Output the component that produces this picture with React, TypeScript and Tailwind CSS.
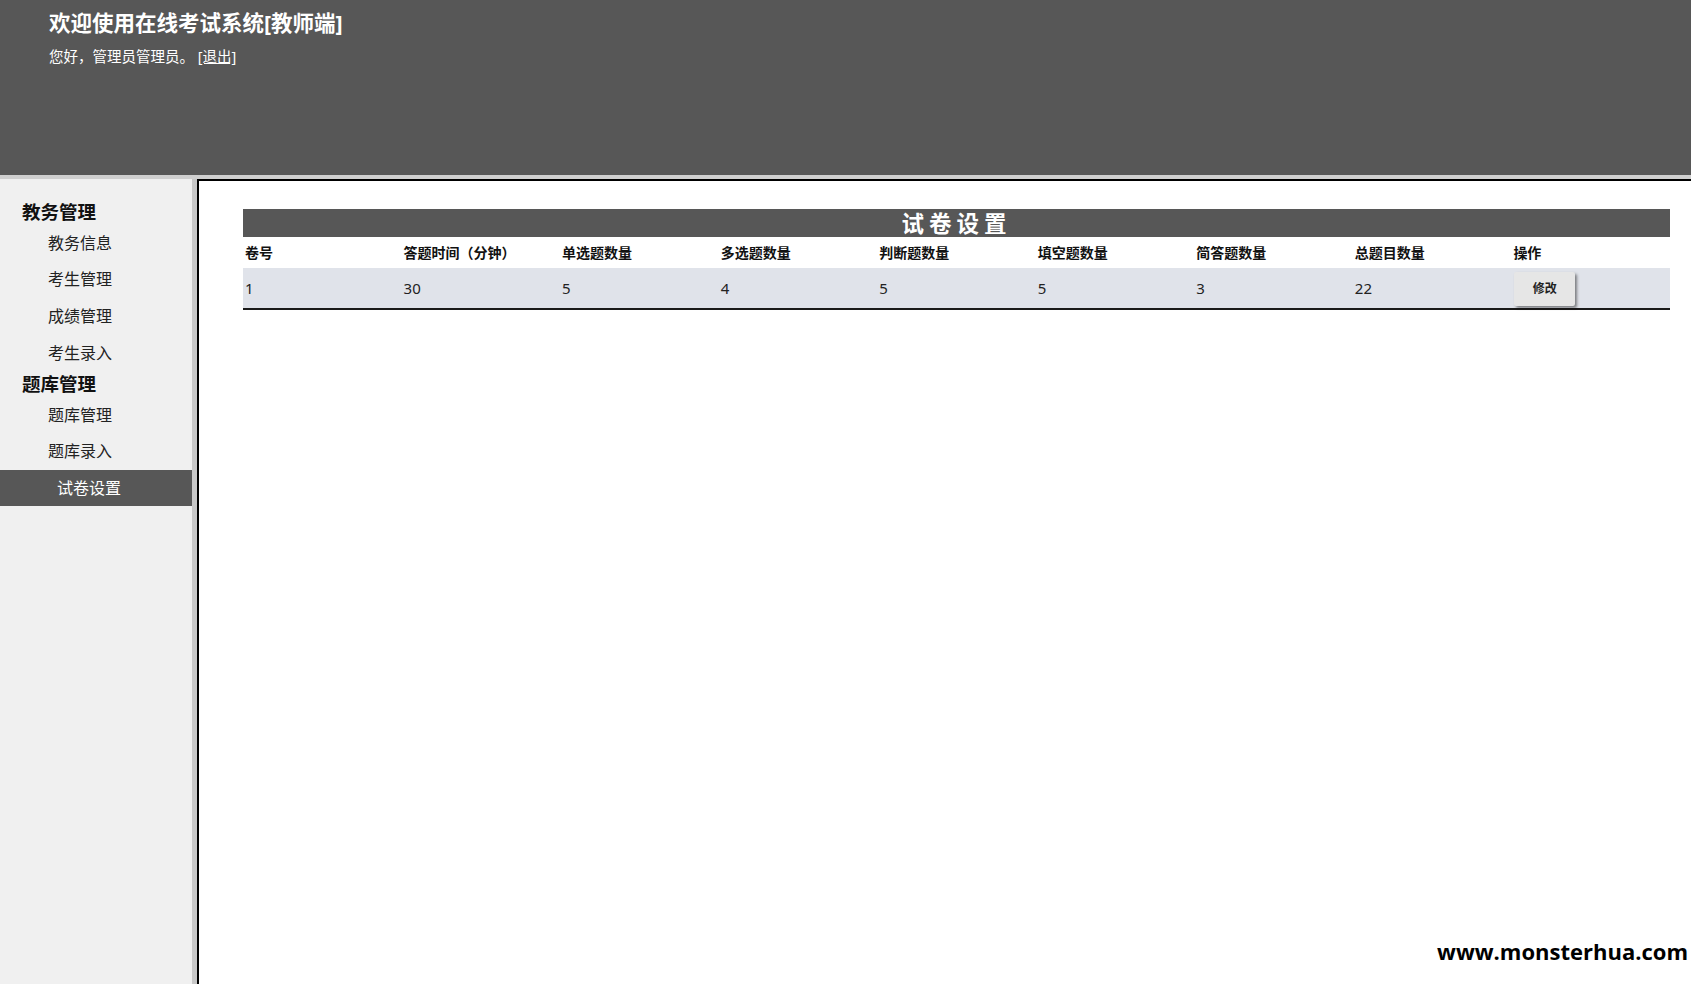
import React from 'react';

const FONT = { fontFamily: '"Noto Sans", "Noto Sans CJK SC", sans-serif' };

type MenuGroup = { title: string; items: string[] };

const menu: MenuGroup[] = [
  { title: '教务管理', items: ['教务信息', '考生管理', '成绩管理', '考生录入'] },
  { title: '题库管理', items: ['题库管理', '题库录入', '试卷设置'] }
];

const columns = ['卷号', '答题时间（分钟）', '单选题数量', '多选题数量', '判断题数量', '填空题数量', '简答题数量', '总题目数量', '操作'];
const paperRow = ['1', '30', '5', '4', '5', '5', '3', '22'];

export default function App() {
  const active = '试卷设置';

  return (
    <div className="flex h-[984px] w-full flex-col overflow-hidden bg-white text-[#111]" style={FONT}>
      {/* 顶部 */}
      <header className="h-[175px] shrink-0 bg-[#575757] pl-[49px] pt-[8px] text-white">
        <h1 className="text-[21.5px] font-bold leading-[30px]">欢迎使用在线考试系统[教师端]</h1>
        <p className="mt-[8px] text-[14.5px] leading-[20px]">
          您好，管理员管理员。 <a className="underline">[退出]</a>
        </p>
      </header>
      <div className="h-[4px] shrink-0 bg-[#cfcfcf]" />

      <div className="flex min-h-0 flex-1">
        {/* 左侧菜单 */}
        <aside className="w-[192px] shrink-0 bg-[#f0f0f0] pt-[20px]">
          {menu.map((group) => (
            <div key={group.title}>
              <h2 className="h-[25.5px] pl-[22px] text-[18.5px] font-bold leading-[25.5px] text-[#111]">{group.title}</h2>
              <ul>
                {group.items.map((item) =>
                  item === active ? (
                    <li key={item} className="flex h-[36.6px] items-center bg-[#575757] pl-[57px] text-[16px] text-white">
                      {item}
                    </li>
                  ) : (
                    <li key={item} className="flex h-[36.6px] items-center pl-[48px] text-[16px] text-[#222]">
                      {item}
                    </li>
                  )
                )}
              </ul>
            </div>
          ))}
        </aside>
        <div className="w-[5px] shrink-0 bg-[#c8c8c8]" />

        {/* 内容区 */}
        <main className="relative flex-1 border-l-2 border-t-2 border-black pl-[44px] pr-[21px] pt-[28px]">
          <div className="flex h-[28px] items-center justify-center bg-[#575757]">
            <span className="mt-[3px] text-[22.5px] font-bold leading-none tracking-[5px] text-white">试卷设置</span>
          </div>
          <table className="w-full table-fixed border-collapse text-left">
            <thead>
              <tr className="h-[31px]">
                {columns.map((col) => (
                  <th key={col} className="px-[2px] text-[14px] font-bold text-[#111]">
                    {col}
                  </th>
                ))}
              </tr>
            </thead>
            <tbody>
              <tr className="h-[41px] border-b-2 border-[#1a1a1a] bg-[#e0e3ea]">
                {paperRow.map((val, i) => (
                  <td key={i} className="px-[2px] text-[15px] text-[#222]">
                    {val}
                  </td>
                ))}
                <td className="px-[3px] pt-[2px]">
                  <button
                    type="button"
                    className="h-[34px] w-[61px] rounded-[2px] bg-[#e6e6e6] text-[12px] font-bold text-[#222] shadow-[2px_2px_3px_rgba(0,0,0,0.45)]"
                  >
                    修改
                  </button>
                </td>
              </tr>
            </tbody>
          </table>

          <span
            className="absolute bottom-[16px] right-[3px] text-[22px] font-bold text-black"
            style={{ fontFamily: '"Open Sans", sans-serif' }}
          >
            www.monsterhua.com
          </span>
        </main>
      </div>
    </div>
  );
}
